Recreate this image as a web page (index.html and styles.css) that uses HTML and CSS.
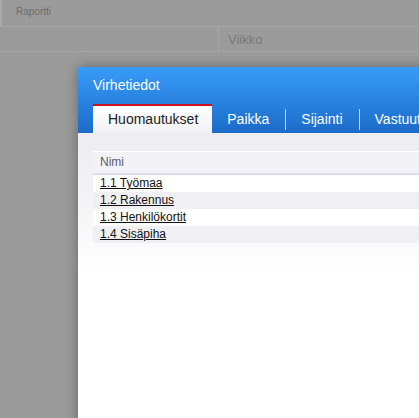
FILE: index.html
```html
<!DOCTYPE html>
<html>
<head>
<meta charset="utf-8">
<link rel="stylesheet" href="styles.css">
</head>
<body>
<div class="page">
  <div class="topbar"><span class="topbar-title">Raportti</span></div>
  <div class="subbar">
    <div class="subbar-cell subbar-first"></div>
    <div class="subbar-cell">Viikko</div>
  </div>
</div>
<div class="modal">
  <div class="modal-header">
    <div class="modal-title">Virhetiedot</div>
    <div class="tabs">
      <div class="tab tab-active">Huomautukset</div>
      <div class="tab">Paikka</div>
      <span class="divider"></span>
      <div class="tab">Sijainti</div>
      <span class="divider"></span>
      <div class="tab">Vastuut</div>
    </div>
  </div>
  <div class="modal-body">
    <div class="table">
      <div class="thead">Nimi</div>
      <div class="row"><a href="#">1.1 Työmaa</a></div>
      <div class="row alt"><a href="#">1.2 Rakennus</a></div>
      <div class="row"><a href="#">1.3 Henkilökortit</a></div>
      <div class="row alt"><a href="#">1.4 Sisäpiha</a></div>
    </div>
  </div>
</div>
</body>
</html>
```
FILE: styles.css
```css
html, body {
  margin: 0;
  padding: 0;
  height: 100%;
  overflow: hidden;
}
body {
  background: #9b9b9b;
  font-family: "Liberation Sans", Arial, sans-serif;
  position: relative;
}
.page {
  width: 100%;
}
.topbar {
  height: 26px;
  border-bottom: 1px solid #a6a6a6;
  border-left: 2px solid #a9a9a9;
  box-sizing: border-box;
  height: 27px;
  padding-left: 14px;
  display: flex;
  align-items: center;
}
.topbar-title {
  font-size: 10px;
  color: #6c6c6c;
  margin-top: -4px;
}
.subbar {
  display: flex;
  height: 24px;
  border-bottom: 1px solid #a3a3a3;
}
.subbar-cell {
  display: flex;
  align-items: center;
  padding-left: 9px;
  font-size: 13px;
  color: #7a7a7a;
}
.subbar-first {
  width: 209px;
  border-right: 1px solid #a6a6a6;
}
.modal {
  position: absolute;
  left: 78px;
  top: 67px;
  width: 620px;
  height: 480px;
  background: #fff;
  box-shadow: 0 0 12px rgba(0, 0, 0, 0.35);
}
.modal-header {
  background: linear-gradient(#389cf8, #1c6bc9);
  padding-left: 15px;
  height: 66px;
  display: flex;
  flex-direction: column;
}
.modal-title {
  color: #fff;
  font-size: 14px;
  height: 37px;
  line-height: 37px;
}
.tabs {
  display: flex;
  align-items: flex-end;
  height: 29px;
}
.tab {
  color: #fff;
  font-size: 14px;
  line-height: 27px;
  padding: 0 16px 0 15px;
  white-space: nowrap;
}
.tab-active {
  color: #222;
  border-top: 2px solid #c8101e;
  background: linear-gradient(#ffffff, #f1f1f5);
  padding: 0 14px 0 15px;
}
.divider {
  width: 1px;
  height: 21px;
  background: rgba(255, 255, 255, 0.75);
  margin-bottom: 3px;
}
.modal-body {
  background: linear-gradient(#ececf1 0px, #f6f6f9 80px, #ffffff 140px);
  padding: 18px 0 0 15px;
  height: 400px;
}
.table {
  width: 600px;
  font-size: 12px;
}
.thead {
  background: #f3f3f7;
  border-top: 1px solid #ffffff;
  border-bottom: 2px solid #dcdcea;
  color: #5b5b6e;
  height: 21px;
  line-height: 21px;
  padding-left: 7px;
}
.row {
  height: 17px;
  line-height: 16px;
  padding-left: 7px;
  background: #ffffff;
}
.row.alt {
  background: #f0f0f4;
}
.row a {
  color: #111;
  text-decoration: underline;
}
```
